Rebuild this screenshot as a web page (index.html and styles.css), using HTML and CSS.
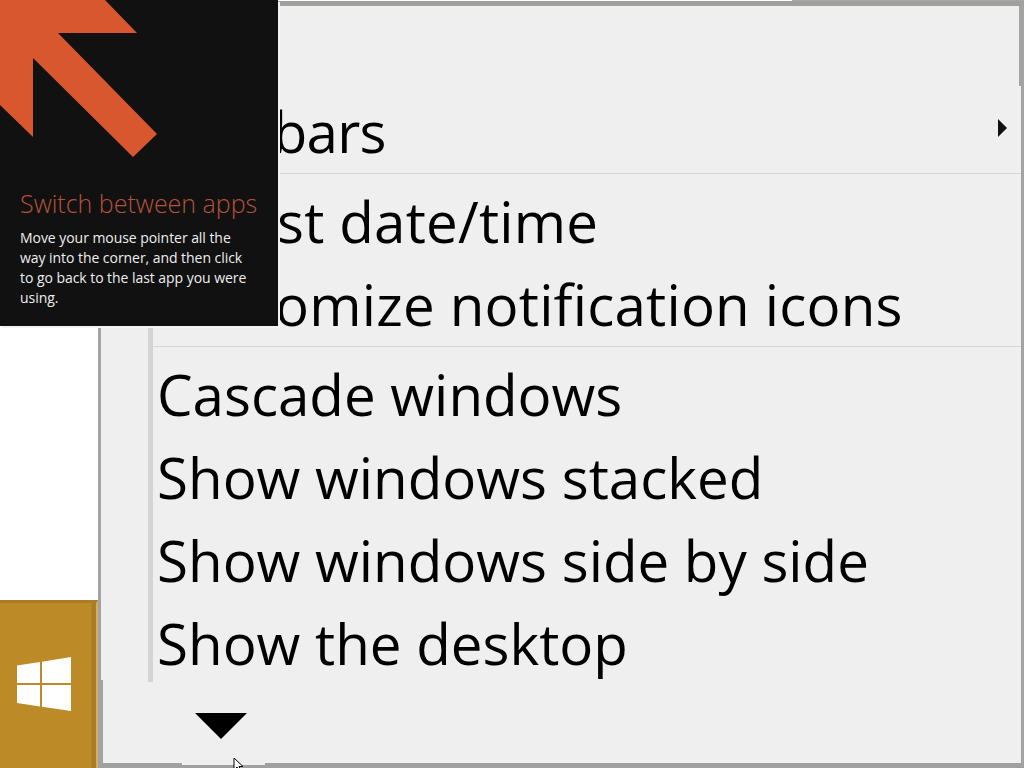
FILE: index.html
```html
<!DOCTYPE html>
<html lang="en">
<head>
  <meta charset="UTF-8">
  <title>Taskbar menu</title>
  <link rel="stylesheet" href="styles.css">
</head>
<body>

  <!-- context menu -->
  <div class="menu">
    <div class="top-edge"></div>
    <div class="items">
      <div class="group first">
        <div class="row"><span class="loose">Tool</span>bars
          <svg class="sub-arrow" width="9" height="18" viewBox="0 0 9 18"><path d="M0 0L9 9L0 18Z"/></svg>
        </div>
      </div>
      <div class="group wide">
        <div class="row">Adjust date/time</div>
        <div class="row">Customize notification icons</div>
      </div>
      <div class="group last">
        <div class="row">Cascade windows</div>
        <div class="row">Show windows stacked</div>
        <div class="row">Show windows side by side</div>
        <div class="row">Show the desktop</div>
      </div>
    </div>
    <div class="more"></div>
    <div class="notch"></div>
    <svg class="pointer" width="12" height="10" viewBox="0 0 12 10"><path d="M1 0V12L4 9L6 13H8L6 8.500H10Z" fill="#fff" stroke="#000"/></svg>
  </div>

  <!-- hint over the corner -->
  <div class="hint">
    <svg class="hint-arrow" width="160" height="160" viewBox="0 0 160 160"><path d="M0 0H105L137 33H58L157 134L133 157L33 58V137L0 105Z"/></svg>
    <h3 class="hint-title">Switch between apps</h3>
    <p class="hint-text">Move your mouse pointer all the way into the corner, and then click to go back to the last app you were using.</p>
  </div>

  <!-- start button -->
  <div class="start">
    <svg width="54" height="54" viewBox="0 0 54 54"><path d="M0 8.500L23 5V26H0ZM25 4.700L54 0V26H25ZM0 28H23V49.500L0 46ZM25 28H54V54L25 49.800Z"/></svg>
  </div>

</body>
</html>
```

FILE: styles.css
```css
html, body {
  margin: 0;
  height: 768px;
  overflow: hidden;
}

body {
  background: #fff;
  font-family: 'Open Sans', 'Noto Sans', sans-serif;
  position: relative;
}

.menu {
  position: absolute;
  left: 98px;
  top: 1px;
  width: 926px;
  height: 767px;
  box-sizing: border-box;
  background: #efefef;
  border-top: 5px solid #a0a09e;
  border-left: 3px solid #a3a3a3;
  border-right: 3px solid #a3a3a3;
  border-bottom: 5px solid #a0a0a0;
}

/* the frame is thicker on these two stretches */
.menu::before {
  content: "";
  position: absolute;
  right: 0;
  top: 0;
  width: 2px;
  height: 80px;
  background: #a3a3a3;
}

.menu::after {
  content: "";
  position: absolute;
  left: 0;
  top: 674px;
  bottom: 0;
  width: 2px;
  background: #a3a3a3;
}

.top-edge {
  position: absolute;
  left: 691px;
  right: -3px;
  top: -6px;
  height: 1px;
  background: #a6a6a4;
}

.items {
  margin: 84px 0 0 47px;
  border-left: 5px solid #d4d4d4;
  height: 592px;
}

.group {
  border-bottom: 1px solid #d6d6d6;
  padding-top: 6px;
}

.group.first {
  padding-top: 0;
  letter-spacing: -0.8px;
}

.group.wide {
  letter-spacing: 0.2px;
}

.group.last {
  border-bottom: none;
}

.loose {
  letter-spacing: 0.6px;
}

.row {
  position: relative;
  height: 83px;
  line-height: 83px;
  padding-left: 4px;
  font-size: 56.500px;
  color: #000;
  white-space: nowrap;
}

.sub-arrow {
  position: absolute;
  right: 14px;
  top: 29px;
  fill: #111;
}

.more {
  position: absolute;
  left: 94px;
  top: 707px;
  width: 0;
  height: 0;
  border-left: 26px solid transparent;
  border-right: 26px solid transparent;
  border-top: 26px solid #000;
}

.notch {
  position: absolute;
  left: 81px;
  bottom: -2px;
  width: 83px;
  height: 2px;
  background: #efefef;
}

.pointer {
  position: absolute;
  left: 132px;
  bottom: -5px;
}

.hint {
  position: absolute;
  left: 0;
  top: 0;
  width: 278px;
  height: 326px;
  box-sizing: border-box;
  padding: 188px 20px 0;
  background: #111;
  box-shadow: 2px 2px 0 #f4f4f4;
  overflow: hidden;
}

.hint-arrow {
  position: absolute;
  left: 0;
  top: 0;
  fill: #d9572e;
}

.hint-title {
  margin: 0;
  font-size: 25px;
  font-weight: 300;
  line-height: 31px;
  color: #b5533a;
  white-space: nowrap;
}

.hint-text {
  margin: 9px 0 0;
  font-size: 14px;
  line-height: 20px;
  letter-spacing: -0.05px;
  color: #eee;
}

.start {
  position: absolute;
  left: 0;
  top: 600px;
  width: 98px;
  height: 168px;
  box-sizing: border-box;
  background: linear-gradient(90deg, #bd8a28 91px, #a97c25 92px);
  border-top: 3px solid #a97c25;
  border-right: 2px solid #d3ae5c;
  padding: 54px 0 0 17px;
}

.start svg {
  display: block;
  fill: #fff;
}
```
